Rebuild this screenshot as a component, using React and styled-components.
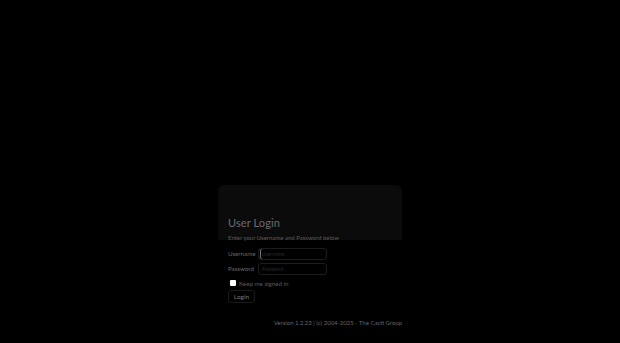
import React from 'react';
import styled, { createGlobalStyle } from 'styled-components';

const GlobalStyle = createGlobalStyle`
  html, body {
    margin: 0;
    padding: 0;
    background: #000;
    font-family: Lato, "Open Sans", sans-serif;
  }
`;

const Page = styled.div`
  width: 620px;
  height: 343px;
  background: #000;
  display: flex;
  justify-content: center;
  padding-top: 185px;
  box-sizing: border-box;
`;

const Column = styled.div`
  width: 184px;
  display: flex;
  flex-direction: column;
`;

const Card = styled.div`
  border-radius: 6px;
  background: linear-gradient(#0b0b0b 0, #0b0b0b 55px, transparent 55px);
  padding: 31px 10px 0 10px;
  display: flex;
  flex-direction: column;
`;

const Title = styled.h1`
  margin: 0;
  font-size: 11px;
  line-height: 13px;
  font-weight: 400;
  color: #6c6c6c;
  letter-spacing: 0.1px;
`;

const Subtitle = styled.div`
  margin-top: 5px;
  font-size: 6px;
  line-height: 8px;
  color: #5a5a5a;
`;

const Form = styled.form`
  margin-top: 5px;
  display: flex;
  flex-direction: column;
  gap: 2px;
`;

const Row = styled.div`
  display: flex;
  align-items: center;
  height: 13px;
`;

const Label = styled.label`
  width: 30px;
  font-size: 6.2px;
  color: #6a6a6a;
`;

const Input = styled.input`
  width: 69px;
  height: 12px;
  box-sizing: border-box;
  background: #000;
  border: 1px solid #1c1c1c;
  border-radius: 3px;
  padding: 0 3px;
  font-family: inherit;
  font-size: 5px;
  color: #888;
  outline: none;
  box-shadow: ${p => (p.$focused ? 'inset 1px 0 0 #000, inset 2px 0 0 #777' : 'none')};

  &::placeholder {
    color: #2a2a2a;
  }
`;

const CheckRow = styled.div`
  margin-top: 2px;
  display: flex;
  align-items: center;
  gap: 3px;
  padding-left: 2px;
  height: 8px;
`;

const Box = styled.span`
  width: 6px;
  height: 6px;
  background: #fff;
  border-radius: 1px;
`;

const CheckText = styled.span`
  font-size: 6.2px;
  color: #5a5a5a;
`;

const Button = styled.button`
  margin-top: 1px;
  align-self: flex-start;
  height: 13px;
  width: 27px;
  padding: 0;
  background: #000;
  border: 1px solid #1a1a1a;
  border-radius: 3px;
  font-family: inherit;
  font-size: 6.5px;
  color: #777;
`;

const Footer = styled.div`
  margin-top: 16px;
  text-align: right;
  font-size: 6px;
  line-height: 8px;
  color: #666;
`;

export default function App() {
  return (
    <>
      <GlobalStyle />
      <Page>
        <Column>
          <Card>
            <Title>User Login</Title>
            <Subtitle>Enter your Username and Password below</Subtitle>
            <Form onSubmit={e => e.preventDefault()}>
              <Row>
                <Label>Username</Label>
                <Input $focused placeholder="Username" />
              </Row>
              <Row>
                <Label>Password</Label>
                <Input type="password" placeholder="Password" />
              </Row>
              <CheckRow>
                <Box />
                <CheckText>Keep me signed in</CheckText>
              </CheckRow>
              <Button type="submit">Login</Button>
            </Form>
          </Card>
          <Footer>Version 1.2.23 | (c) 2004-2025 - The Cacti Group</Footer>
        </Column>
      </Page>
    </>
  );
}
